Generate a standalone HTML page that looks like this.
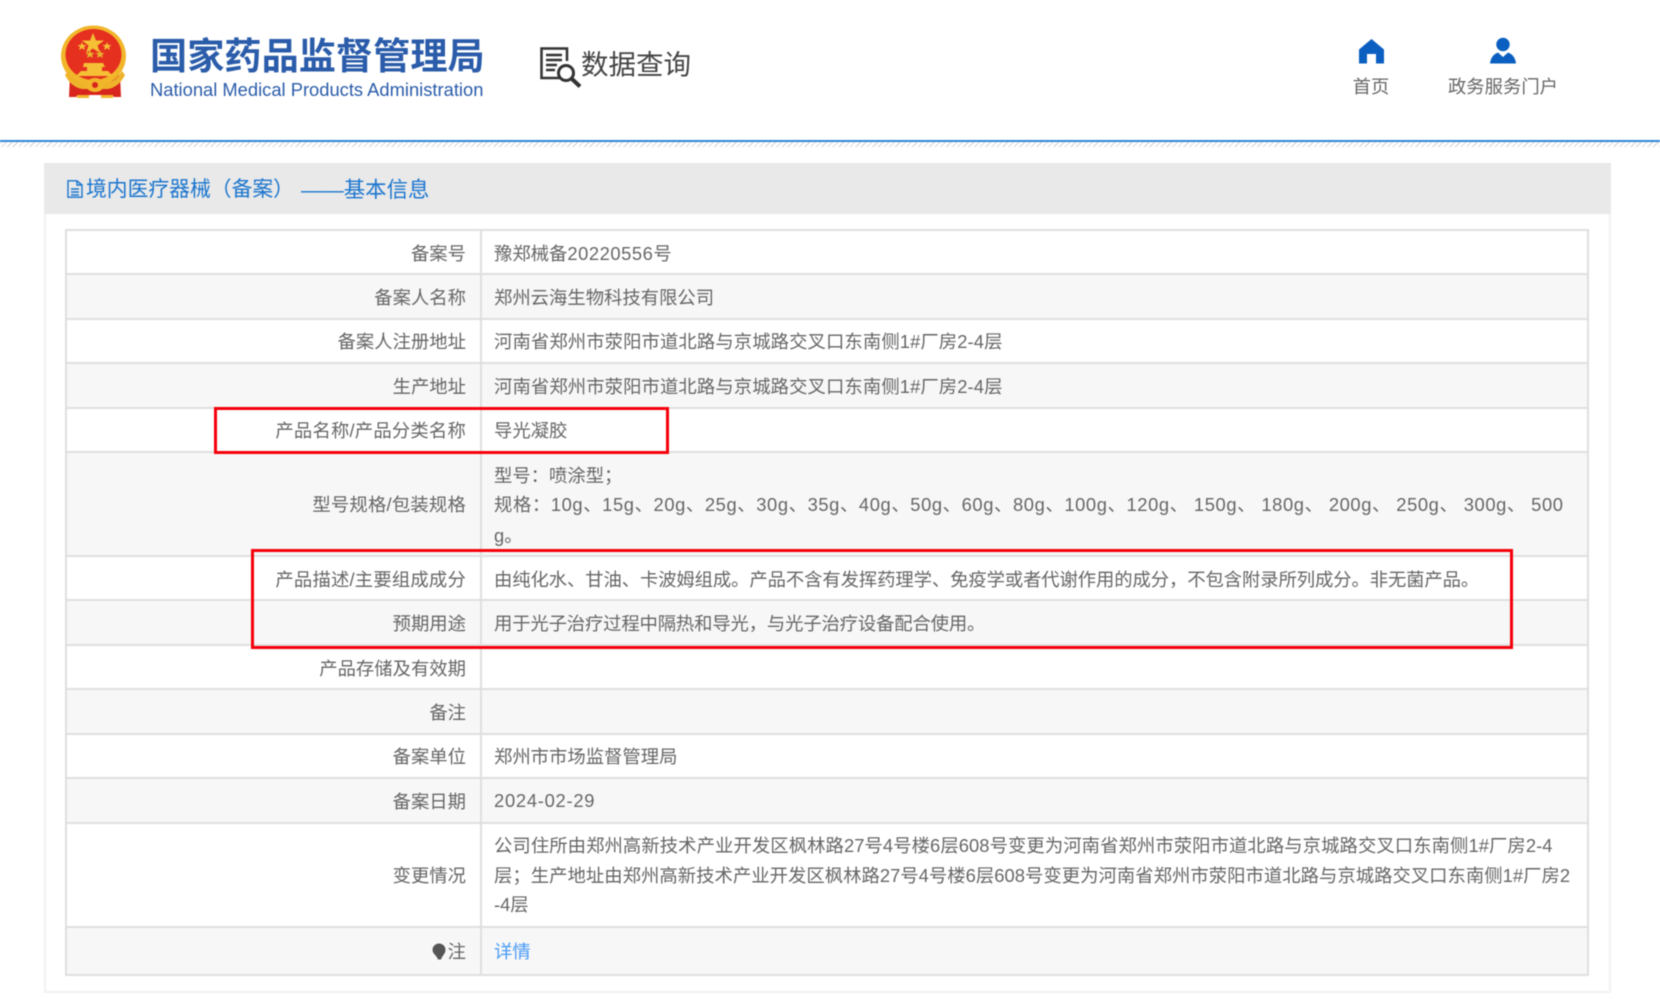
<!DOCTYPE html>
<html lang="zh-CN">
<head>
<meta charset="utf-8">
<title>境内医疗器械（备案）基本信息</title>
<style>
html,body{margin:0;padding:0;background:#fff;}
body{width:1660px;height:999px;position:relative;overflow:hidden;font-family:"Liberation Sans","Noto Sans CJK SC",sans-serif;color:#666;}
#w{position:absolute;left:0;top:0;width:1660px;height:999px;filter:blur(.45px);}
.a{position:absolute;}
.r{position:absolute;left:66px;width:1522px;border-top:2px solid #dfdfdf;box-sizing:border-box;}
.g{background:#f7f7f7;}
.l,.v{position:absolute;font-size:18.35px;line-height:30px;height:30px;white-space:nowrap;}
.l{right:1194px;text-align:right;}
.v{left:494px;}
.d{letter-spacing:.55px;}
</style>
</head>
<body>
<div id="w">
<!-- header -->
<svg class="a" style="left:60px;top:25px" width="70" height="74" viewBox="0 0 70 74">
<path d="M10 50L9 72H16L18 70H52L54 72H61L60 50Z" fill="#d8251d"/>
<ellipse cx="33.500" cy="31" rx="32.500" ry="30.500" fill="#f1b62a"/>
<ellipse cx="33.500" cy="29.500" rx="28" ry="25.500" fill="#e5301f"/>
<polygon points="33,8 36,15.500 44,15.500 37.500,20.500 40,28 33,23.500 26,28 28.500,20.500 22,15.500 30,15.500" fill="#f5c035"/>
<polygon points="22,17 23.200,20 26.500,20 24,22 25,25 22,23.200 19,25 20,22 17.500,20 20.800,20" fill="#f5c035"/>
<polygon points="47,17 48.200,20 51.500,20 49,22 50,25 47,23.200 44,25 45,22 42.500,20 45.800,20" fill="#f5c035"/>
<polygon points="30,25 31.200,28 34.500,28 32,30 33,33 30,31.200 27,33 28,30 25.500,28 28.800,28" fill="#e8b52e"/>
<polygon points="40,25 41.200,28 44.500,28 42,30 43,33 40,31.200 37,33 38,30 35.500,28 38.800,28" fill="#e8b52e"/>
<path d="M24 38h19l2 4h-3v4h6l5 5H16l5-5h6v-4h-4z" fill="#f5c035"/>
<path d="M8 46q7 12 17 12h20q10 0 17-12l3 4q-6 12-17 14H22Q11 62 5 50z" fill="#efb32a"/>
<ellipse cx="35" cy="60" rx="9" ry="7" fill="#f1b62a"/>
<circle cx="35" cy="60" r="3" fill="#d8251d"/>
<path d="M17 71.500h12M41 71.500h12" stroke="#f1b62a" stroke-width="3"/>
</svg>
<div class="a" style="left:150px;top:32px;font-size:37.200px;line-height:48px;font-weight:700;color:#2a5caa;white-space:nowrap;">国家药品监督管理局</div>
<div class="a" style="left:150px;top:78px;font-size:18.350px;line-height:24px;color:#2a5caa;white-space:nowrap;">National Medical Products Administration</div>
<svg class="a" style="left:539px;top:46px" width="44" height="44" viewBox="0 0 44 44" fill="none" stroke="#333">
<path d="M22 32H2.500V2.500H28V15" stroke-width="2.500"/>
<path d="M7 9h16M7 14h16M7 19h11M7 24h9" stroke-width="2.400"/>
<circle cx="27" cy="27" r="7.500" stroke-width="3"/>
<path d="M33 33l8 7.500" stroke-width="4"/>
</svg>
<div class="a" style="left:581px;top:45px;font-size:27.500px;line-height:40px;color:#444;white-space:nowrap;">数据查询</div>
<svg class="a" style="left:1358px;top:38px" width="27" height="26" viewBox="0 0 27 26"><path d="M13.500 1L26 11.500V25.500H18V16H9V25.500H1V11.500Z" fill="#0b5fc0"/></svg>
<svg class="a" style="left:1489px;top:37px" width="28" height="27" viewBox="0 0 28 27"><circle cx="14" cy="7.500" r="6.700" fill="#0b5fc0"/><path d="M1 26.500Q2 18 9 15.500L14 20L19 15.500Q26 18 27 26.500Z" fill="#0b5fc0"/></svg>
<div class="a" style="left:1331px;width:80px;text-align:center;top:72px;font-size:18.350px;line-height:30px;">首页</div>
<div class="a" style="left:1443px;width:120px;text-align:center;top:72px;font-size:18.350px;line-height:30px;white-space:nowrap;">政务服务门户</div>
<div class="a" style="left:0;top:140px;width:1660px;height:1.500px;background:#2f86d8;"></div>
<div class="a" style="left:0;top:141.500px;width:1660px;height:5.500px;background:repeating-linear-gradient(135deg,#dcdcdc 0 1.200px,#fff 1.200px 4px);"></div>
<!-- panel -->
<div class="a" style="left:44px;top:163px;width:1567px;height:830px;box-sizing:border-box;border:2px solid #f2f2f2;"></div>
<div class="a" style="left:44px;top:163px;width:1567px;height:51px;background:#e9e9e9;"></div>
<svg class="a" style="left:67px;top:180px" width="16" height="18" viewBox="0 0 16 18" fill="none" stroke="#1a75cf" stroke-width="1.400"><path d="M1 .8H10L15 5V17.200H1Z"/><path d="M10 .8V5H15M4 9h8M4 12h8M4 15h8"/></svg>
<div class="a" style="left:86px;top:175px;font-size:20.800px;line-height:30px;color:#1a75cf;white-space:nowrap;">境内医疗器械（备案）</div>
<div class="a" style="left:301px;top:175px;font-size:21.400px;line-height:30px;color:#1a75cf;white-space:nowrap;">——基本信息</div>
<!-- table rows -->
<div class="r" style="top:229px;height:45px"></div>
<div class="r g" style="top:273px;height:45px"></div>
<div class="r" style="top:318px;height:45px"></div>
<div class="r g" style="top:362px;height:45px"></div>
<div class="r" style="top:407px;height:45px"></div>
<div class="r g" style="top:451px;height:105px"></div>
<div class="r" style="top:555px;height:45px"></div>
<div class="r g" style="top:599px;height:45px"></div>
<div class="r" style="top:644px;height:45px"></div>
<div class="r g" style="top:688px;height:45px"></div>
<div class="r" style="top:733px;height:45px"></div>
<div class="r g" style="top:777px;height:45px"></div>
<div class="r" style="top:822px;height:105px"></div>
<div class="r g" style="top:926px;height:50px;border-bottom:2px solid #dfdfdf"></div>
<div class="a" style="left:65px;top:229px;width:2px;height:747px;background:#dfdfdf"></div>
<div class="a" style="left:1587px;top:229px;width:2px;height:747px;background:#dfdfdf"></div>
<div class="a" style="left:480px;top:229px;width:2px;height:747px;background:#dfdfdf"></div>
<!-- labels -->
<div class="l" style="top:239px">备案号</div>
<div class="l" style="top:283px">备案人名称</div>
<div class="l" style="top:327px">备案人注册地址</div>
<div class="l" style="top:372px">生产地址</div>
<div class="l" style="top:416px;letter-spacing:.19px">产品名称/产品分类名称</div>
<div class="l" style="top:490px;letter-spacing:.2px">型号规格/包装规格</div>
<div class="l" style="top:565px;letter-spacing:.19px">产品描述/主要组成成分</div>
<div class="l" style="top:609px">预期用途</div>
<div class="l" style="top:654px">产品存储及有效期</div>
<div class="l" style="top:698px">备注</div>
<div class="l" style="top:742px">备案单位</div>
<div class="l" style="top:787px">备案日期</div>
<div class="l" style="top:861px">变更情况</div>
<div class="l" style="top:937px">注</div>
<svg class="a" style="left:432px;top:943px" width="14" height="18" viewBox="0 0 14 18"><path d="M7 .5a6.500 6.500 0 0 1 6.500 6.500c0 3.500-3.500 6-4.500 9.500H6C5 13 .5 10.500 .5 7A6.500 6.500 0 0 1 7 .5z" fill="#555"/></svg>
<!-- values -->
<div class="v" style="top:239px">豫郑械备<span class="d">20220556</span>号</div>
<div class="v" style="top:283px">郑州云海生物科技有限公司</div>
<div class="v" style="top:327px;letter-spacing:.1px">河南省郑州市荥阳市道北路与京城路交叉口东南侧1#厂房2-4层</div>
<div class="v" style="top:372px;letter-spacing:.1px">河南省郑州市荥阳市道北路与京城路交叉口东南侧1#厂房2-4层</div>
<div class="v" style="top:416px">导光凝胶</div>
<div class="v" style="top:461px">型号：喷涂型；</div>
<div class="v" style="top:490px;letter-spacing:.6px;word-spacing:-.4px">规格：10g、15g、20g、25g、30g、35g、40g、50g、60g、80g、100g、120g、 150g、 180g、 200g、 250g、 300g、 500</div>
<div class="v" style="top:521px">g。</div>
<div class="v" style="top:565px;letter-spacing:-.1px">由纯化水、甘油、卡波姆组成。产品不含有发挥药理学、免疫学或者代谢作用的成分，不包含附录所列成分。非无菌产品。</div>
<div class="v" style="top:609px;letter-spacing:-.15px">用于光子治疗过程中隔热和导光，与光子治疗设备配合使用。</div>
<div class="v" style="top:742px">郑州市市场监督管理局</div>
<div class="v" style="top:786px;letter-spacing:.74px">2024-02-29</div>
<div class="v" style="top:831px;letter-spacing:.075px">公司住所由郑州高新技术产业开发区枫林路27号4号楼6层608号变更为河南省郑州市荥阳市道北路与京城路交叉口东南侧1#厂房2-4</div>
<div class="v" style="top:861px;letter-spacing:.03px">层；生产地址由郑州高新技术产业开发区枫林路27号4号楼6层608号变更为河南省郑州市荥阳市道北路与京城路交叉口东南侧1#厂房2</div>
<div class="v" style="top:890px">-4层</div>
<div class="v" style="top:937px;color:#4a9bf5">详情</div>
<!-- red boxes -->
<div class="a" style="left:214px;top:407px;width:455px;height:47px;box-sizing:border-box;border:3px solid #f5000a;"></div>
<div class="a" style="left:251px;top:549px;width:1262px;height:100px;box-sizing:border-box;border:3px solid #f5000a;"></div>
</div>
</body>
</html>
